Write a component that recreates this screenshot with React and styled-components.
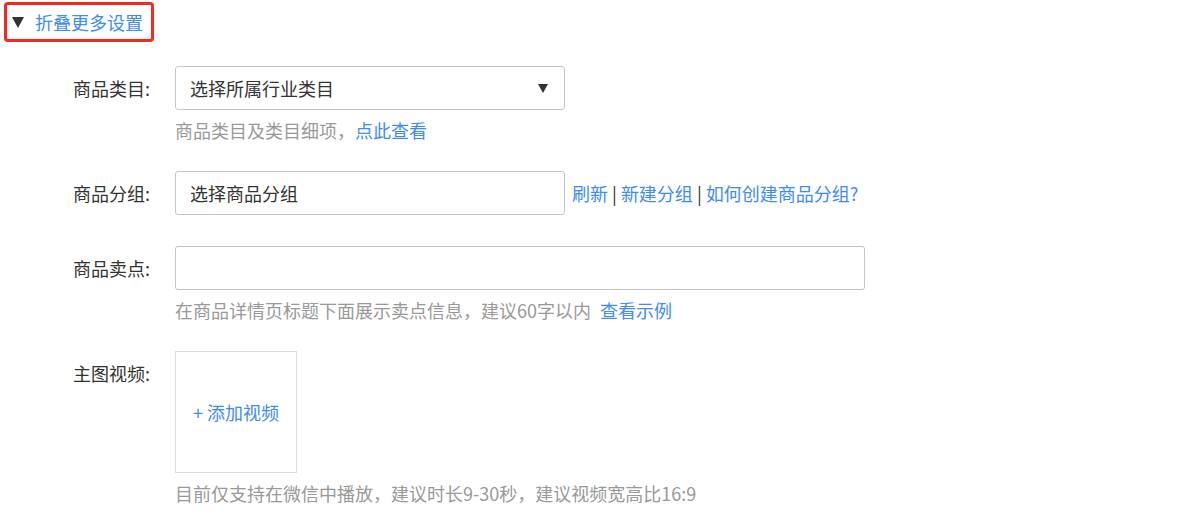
import styled, { createGlobalStyle } from 'styled-components';

const GlobalStyle = createGlobalStyle`
  body {
    margin: 0;
    background: #fff;
    font-family: "Noto Sans CJK SC", "Liberation Sans", sans-serif;
    color: #333;
  }
`;

const Page = styled.div`
  padding: 2px 0 0 4px;
`;

const Toggle = styled.div`
  display: inline-flex;
  align-items: center;
  gap: 11px;
  width: 139px;
  height: 34px;
  box-sizing: content-box;
  border: 3px solid #f52a1c;
  border-radius: 4px;
  padding: 0 0 0 5px;
  color: #3d8bf5;
  font-size: 18px;
  cursor: pointer;
`;

const Triangle = styled.span`
  width: 0;
  height: 0;
  border-left: 6px solid transparent;
  border-right: 6px solid transparent;
  border-top: 11px solid #333;
  margin-top: 1px;
`;

const Form = styled.div`
  display: flex;
  flex-direction: column;
  gap: 29px;
  margin-top: 24px;
`;

const Row = styled.div`
  display: grid;
  grid-template-columns: 150px 1fr;
  column-gap: 25px;
  margin-left: -4px;
  margin-bottom: ${p => (p.$extra ? '2px' : '0')};
`;

const Label = styled.div`
  text-align: right;
  font-size: 18px;
  line-height: 44px;
  color: #333;
  white-space: nowrap;
`;

const Field = styled.div`
  display: flex;
  flex-direction: column;
  align-items: flex-start;
`;

const Line = styled.div`
  display: flex;
  align-items: center;
  gap: 7px;
`;

const Box = styled.div`
  box-sizing: border-box;
  width: ${p => p.$w}px;
  height: 44px;
  border: 1px solid #c4c4c4;
  border-radius: 3px;
  padding: 0 14px;
  display: flex;
  align-items: center;
  justify-content: space-between;
  font-size: 18px;
  color: #333;
`;

const Caret = styled.span`
  width: 0;
  height: 0;
  border-left: 5px solid transparent;
  border-right: 5px solid transparent;
  border-top: 9px solid #333;
  margin-right: 2px;
`;

const Hint = styled.div`
  margin-top: 8px;
  font-size: 18px;
  line-height: 24px;
  color: #999;
  white-space: nowrap;
`;

const Link = styled.a`
  color: #3d8bf5;
  text-decoration: none;
  cursor: pointer;
  margin-left: ${p => (p.$gap ? '9px' : '0')};
`;

const Links = styled.div`
  font-size: 18px;
  color: #333;
  white-space: nowrap;
`;

const Sep = styled.span`
  color: #333;
  margin: 0 4px;
`;

const Upload = styled.div`
  box-sizing: border-box;
  width: 122px;
  height: 122px;
  border: 1px solid #ddd;
  display: flex;
  align-items: center;
  justify-content: center;
  color: #3d8bf5;
  font-size: 18px;
  cursor: pointer;
`;

export default function App() {
  return (
    <Page>
      <GlobalStyle />
      <Toggle>
        <Triangle />
        <span>折叠更多设置</span>
      </Toggle>

      <Form>
        <Row>
          <Label>商品类目:</Label>
          <Field>
            <Box $w={390}>
              <span>选择所属行业类目</span>
              <Caret />
            </Box>
            <Hint>
              商品类目及类目细项，<Link>点此查看</Link>
            </Hint>
          </Field>
        </Row>

        <Row $extra>
          <Label>商品分组:</Label>
          <Field>
            <Line>
              <Box $w={390}>
                <span>选择商品分组</span>
              </Box>
              <Links>
                <Link>刷新</Link>
                <Sep>|</Sep>
                <Link>新建分组</Link>
                <Sep>|</Sep>
                <Link>如何创建商品分组?</Link>
              </Links>
            </Line>
          </Field>
        </Row>

        <Row>
          <Label>商品卖点:</Label>
          <Field>
            <Box $w={690} />
            <Hint>
              在商品详情页标题下面展示卖点信息，建议60字以内
              <Link $gap>查看示例</Link>
            </Hint>
          </Field>
        </Row>

        <Row>
          <Label>主图视频:</Label>
          <Field>
            <Upload>+ 添加视频</Upload>
            <Hint>目前仅支持在微信中播放，建议时长9-30秒，建议视频宽高比16:9</Hint>
          </Field>
        </Row>
      </Form>
    </Page>
  );
}
